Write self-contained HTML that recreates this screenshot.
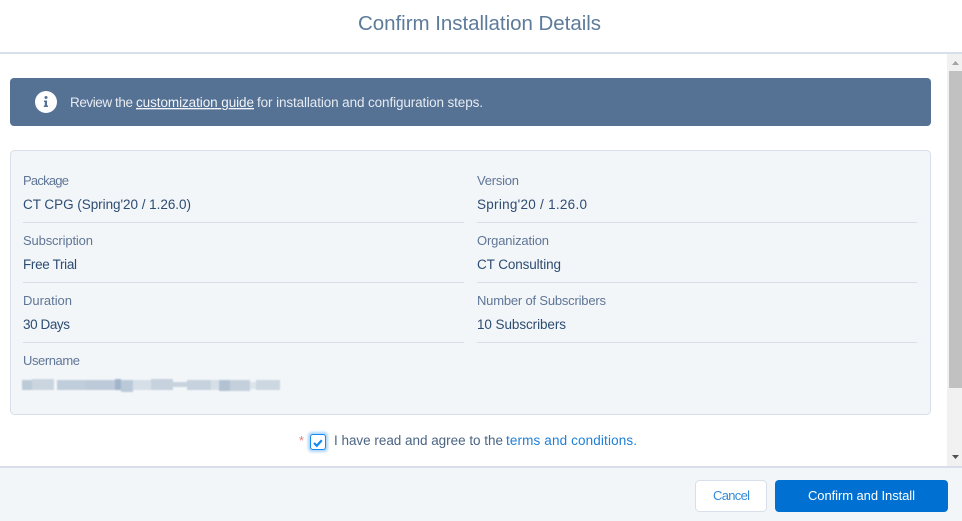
<!DOCTYPE html>
<html lang="en">
<head>
<meta charset="utf-8">
<title>Confirm Installation Details</title>
<style>
html,body{margin:0;padding:0;width:962px;height:521px;overflow:hidden;background:#fff}
svg{display:block;font-family:"Liberation Sans",sans-serif}
.l{font-size:13px;fill:#5f7696}
.v{font-size:13.500px;fill:#2d4c72}
</style>
</head>
<body>
<svg width="962" height="521" viewBox="0 0 962 521" xmlns="http://www.w3.org/2000/svg">
<defs>
<filter id="b" x="-5%" y="-50%" width="110%" height="200%"><feGaussianBlur stdDeviation="0.8"/></filter>
<filter id="g" x="-50%" y="-50%" width="200%" height="200%"><feGaussianBlur stdDeviation="1.2"/></filter>
</defs>
<rect width="962" height="521" fill="#fff"/>
<rect y="52" width="962" height="2" fill="#d8dfea"/>
<text x="358" y="30" font-size="20.500" fill="#5d7b9b" textLength="243" lengthAdjust="spacing">Confirm Installation Details</text>

<!-- scrollbar -->
<rect x="947" y="54" width="15" height="412" fill="#f1f1f1"/>
<rect x="949" y="71" width="13" height="317" fill="#c1c1c1"/>
<path d="M952 65h7l-3.500-4z" fill="#a3a3a3"/>
<path d="M952 455h7l-3.500 4z" fill="#505050"/>

<!-- banner -->
<rect x="10" y="78" width="921" height="48" rx="4" fill="#557194"/>
<circle cx="46" cy="102" r="11" fill="#fff"/>
<circle cx="46" cy="97.500" r="1.500" fill="#557194"/>
<path d="M44 100.500h3v5h1v1.500h-4.200v-1.500h1v-3.500h-.8z" fill="#557194"/>
<g font-size="13.500" fill="#e6ebf1">
<text x="70" y="107" textLength="63" lengthAdjust="spacing">Review the</text>
<text x="136" y="107" textLength="118" lengthAdjust="spacing" text-decoration="underline" fill="#f2f5f8">customization guide</text>
<text x="257" y="107" textLength="226" lengthAdjust="spacing">for installation and configuration steps.</text>
</g>

<!-- panel -->
<rect x="10.500" y="150.500" width="920" height="264" rx="4" fill="#f3f6f9" stroke="#d8dfea"/>

<text class="l" x="23" y="185" textLength="46" lengthAdjust="spacing">Package</text>
<text class="v" x="23" y="209" textLength="168" lengthAdjust="spacing">CT CPG (Spring'20 / 1.26.0)</text>
<rect x="23" y="222" width="441" height="1" fill="#d8dfea"/>
<text class="l" x="477" y="185" textLength="42" lengthAdjust="spacing">Version</text>
<text class="v" x="477" y="209" textLength="110" lengthAdjust="spacing">Spring'20 / 1.26.0</text>
<rect x="477" y="222" width="440" height="1" fill="#d8dfea"/>

<text class="l" x="23" y="245" textLength="70" lengthAdjust="spacing">Subscription</text>
<text class="v" x="23" y="269" textLength="54" lengthAdjust="spacing">Free Trial</text>
<rect x="23" y="282" width="441" height="1" fill="#d8dfea"/>
<text class="l" x="477" y="245" textLength="72" lengthAdjust="spacing">Organization</text>
<text class="v" x="477" y="269" textLength="84" lengthAdjust="spacing">CT Consulting</text>
<rect x="477" y="282" width="440" height="1" fill="#d8dfea"/>

<text class="l" x="23" y="305" textLength="49" lengthAdjust="spacing">Duration</text>
<text class="v" x="23" y="329" textLength="47" lengthAdjust="spacing">30 Days</text>
<rect x="23" y="342" width="441" height="1" fill="#d8dfea"/>
<text class="l" x="477" y="305" textLength="129" lengthAdjust="spacing">Number of Subscribers</text>
<text class="v" x="477" y="329" textLength="89" lengthAdjust="spacing">10 Subscribers</text>
<rect x="477" y="342" width="440" height="1" fill="#d8dfea"/>

<text class="l" x="23" y="365" textLength="57" lengthAdjust="spacing">Username</text>

<!-- obscured username -->
<g filter="url(#b)">
<rect x="22" y="380" width="10" height="10" fill="#bccad8"/>
<rect x="32" y="379" width="22" height="11" fill="#cad5e0"/>
<rect x="57" y="380" width="28" height="10" fill="#c0cddb"/>
<rect x="85" y="380" width="30" height="10" fill="#bdcad9"/>
<rect x="115" y="379" width="6" height="11" fill="#a0b5c9"/>
<rect x="121" y="380" width="12" height="12" fill="#bac9d8"/>
<rect x="133" y="380" width="18" height="10" fill="#d6dfe8"/>
<rect x="151" y="379" width="22" height="11" fill="#c6d2de"/>
<rect x="173" y="382" width="14" height="5" fill="#c8d3de"/>
<rect x="187" y="380" width="24" height="10" fill="#c6d2de"/>
<rect x="211" y="380" width="8" height="10" fill="#d6dfe8"/>
<rect x="219" y="380" width="11" height="11" fill="#b2c2d2"/>
<rect x="230" y="380" width="20" height="11" fill="#c3d0dc"/>
<rect x="250" y="382" width="6" height="7" fill="#dce4ec"/>
<rect x="256" y="380" width="24" height="10" fill="#ccd7e1"/>
</g>

<!-- checkbox row -->
<text x="299" y="445" font-size="12.500" fill="#e07f7c">*</text>
<rect x="308" y="432" width="20" height="20" rx="4" fill="#1589ee" opacity=".35" filter="url(#g)"/>
<rect x="310.500" y="434.500" width="15" height="15" rx="2.500" fill="#fff" stroke="#1589ee"/>
<path d="M314 443l2.800 2.800 5-5.500" fill="none" stroke="#1589ee" stroke-width="2.200"/>
<g font-size="13.500">
<text x="334" y="445" fill="#4a6483" textLength="169" lengthAdjust="spacing">I have read and agree to the</text>
<text x="506" y="445" fill="#1f7fd6" textLength="131" lengthAdjust="spacing">terms and conditions.</text>
</g>

<!-- footer -->
<rect y="468" width="962" height="53" fill="#f3f6f9"/>
<rect y="466" width="962" height="2" fill="#d8dfea"/>
<rect x="695.500" y="480.500" width="71" height="31" rx="4" fill="#fff" stroke="#d8dfea"/>
<text x="713" y="500" font-size="13" fill="#348ad9" textLength="37" lengthAdjust="spacing">Cancel</text>
<rect x="775" y="480" width="173" height="32" rx="4" fill="#0070d2"/>
<text x="808" y="500" font-size="13" fill="#fff" textLength="107" lengthAdjust="spacing">Confirm and Install</text>
</svg>
</body>
</html>
